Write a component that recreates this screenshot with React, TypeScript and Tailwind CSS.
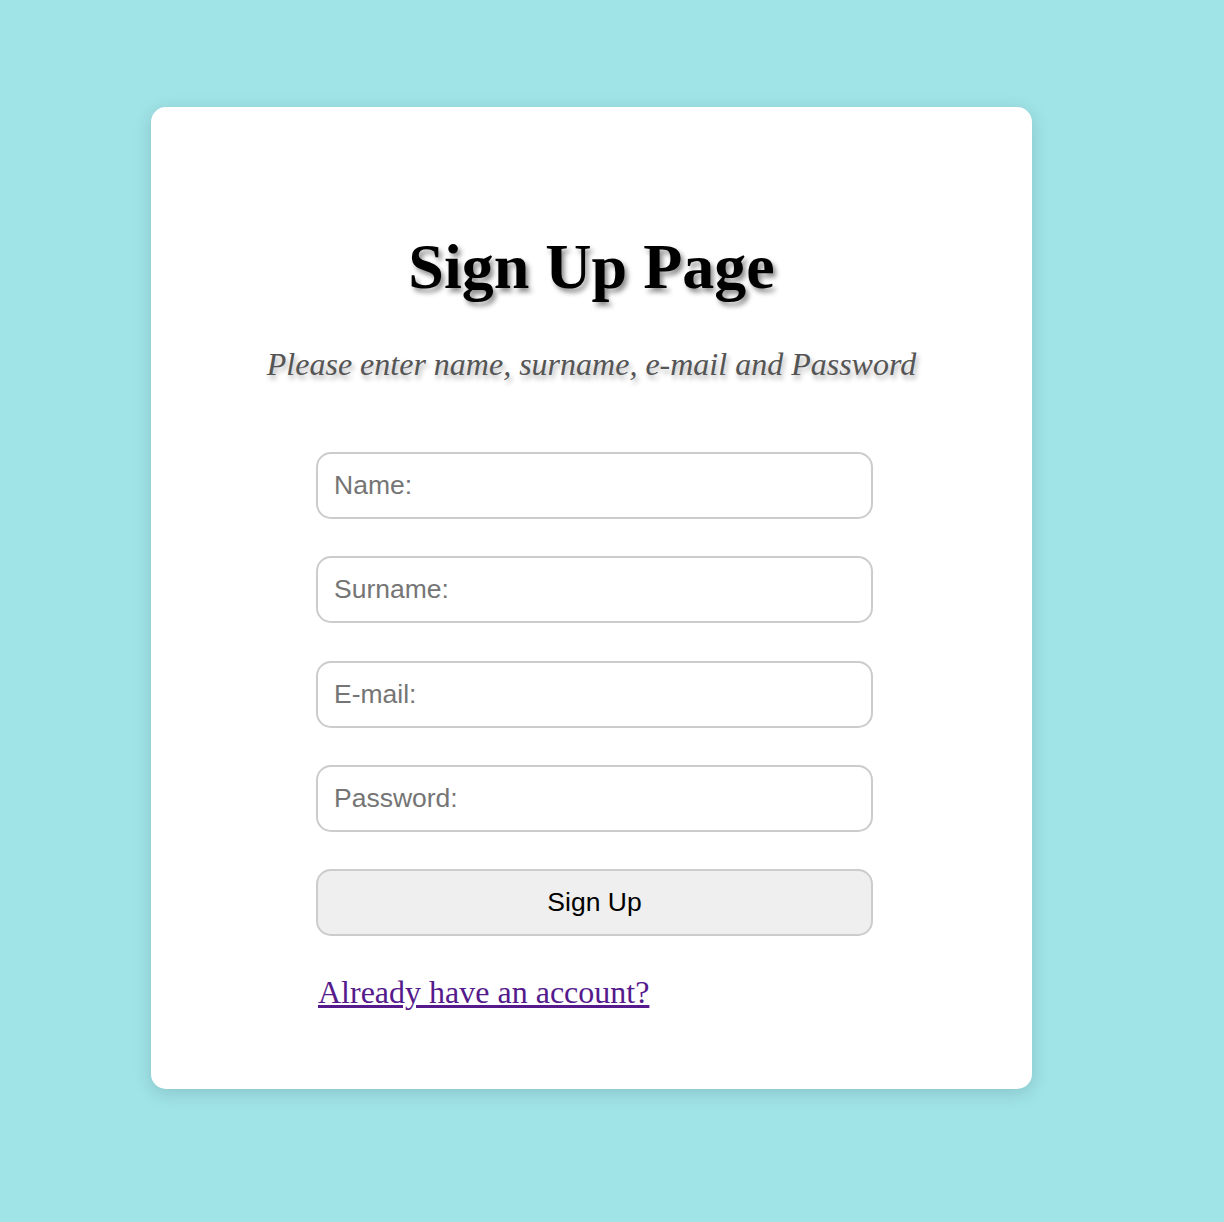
export default function App() {
  return (
    <div className="min-h-screen bg-[#a0e4e8] pt-[107px] pb-[133px]">
      {/* Card */}
      <div className="ml-[151px] w-[881px] rounded-[15px] bg-white shadow-[0_4px_18px_rgba(0,0,0,0.15)] pt-[124px] pb-[79px]">
        <h1
          className="text-center text-[64px] font-bold leading-[71px] text-black [text-shadow:3px_4px_5px_rgba(0,0,0,0.45)]"
          style={{ fontFamily: '"Liberation Serif", "Times New Roman", serif' }}
        >
          Sign Up Page
        </h1>
        <p
          className="mt-[44px] text-center text-[32px] italic leading-[36px] text-[#555] [text-shadow:2px_4px_5px_rgba(0,0,0,0.3)]"
          style={{ fontFamily: '"Liberation Serif", "Times New Roman", serif' }}
        >
          Please enter name, surname, e-mail and Password
        </p>

        {/* Form */}
        <form
          className="ml-[165px] mt-[70px] flex w-[557px] flex-col gap-[37.25px]"
          style={{ fontFamily: '"Liberation Sans", Arial, sans-serif' }}
          onSubmit={(e) => e.preventDefault()}
        >
          <input
            type="text"
            placeholder="Name:"
            className="h-[67px] rounded-[15px] border-2 border-[#ccc] bg-white pl-[16px] text-[26.5px] text-black placeholder:text-[#757575] outline-none"
          />
          <input
            type="text"
            placeholder="Surname:"
            className="h-[67px] rounded-[15px] border-2 border-[#ccc] bg-white pl-[16px] text-[26.5px] text-black placeholder:text-[#757575] outline-none"
          />
          <input
            type="email"
            placeholder="E-mail:"
            className="h-[67px] rounded-[15px] border-2 border-[#ccc] bg-white pl-[16px] text-[26.5px] text-black placeholder:text-[#757575] outline-none"
          />
          <input
            type="password"
            placeholder="Password:"
            className="h-[67px] rounded-[15px] border-2 border-[#ccc] bg-white pl-[16px] text-[26.5px] text-black placeholder:text-[#757575] outline-none"
          />
          <button
            type="submit"
            className="h-[67px] rounded-[15px] border-2 border-[#ccc] bg-[#efefef] text-[26.5px] text-black"
          >
            Sign Up
          </button>
        </form>

        <div className="ml-[167px] mt-[38px]">
          <a
            href="#"
            className="text-[32px] leading-[36px] text-[#551a8b] underline"
            style={{ fontFamily: '"Liberation Serif", "Times New Roman", serif' }}
          >
            Already have an account?
          </a>
        </div>
      </div>
    </div>
  );
}
